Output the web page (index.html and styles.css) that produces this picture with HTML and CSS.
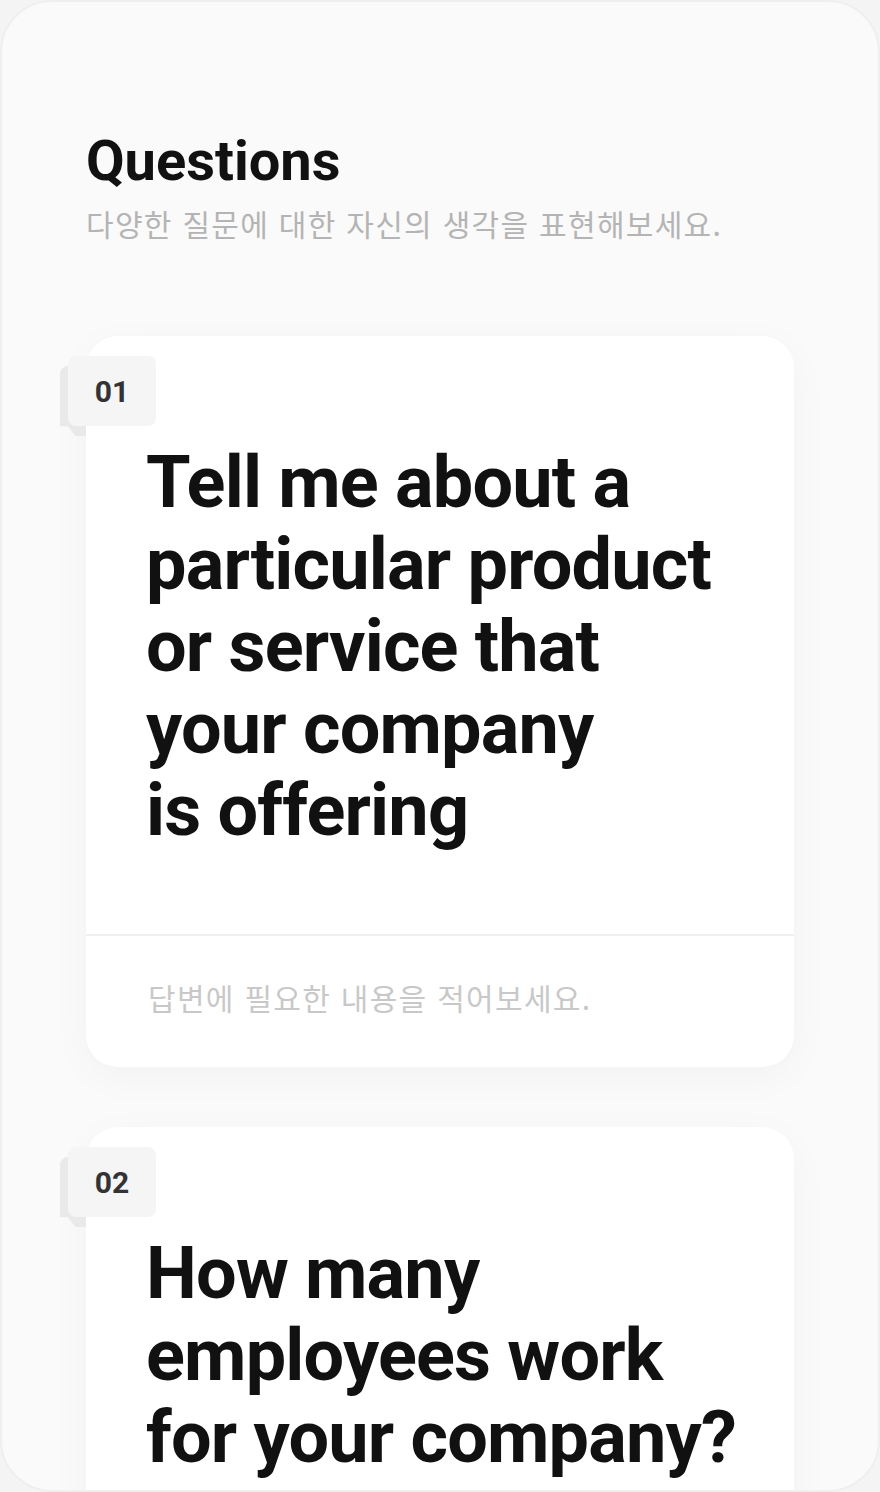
FILE: index.html
```html
<!DOCTYPE html>
<html lang="ko">
<head>
<meta charset="utf-8">
<title>Questions</title>
<link rel="stylesheet" href="styles.css">
</head>
<body>
<div class="frame">
  <header class="intro">
    <h1 class="title">Questions</h1>
    <p class="subtitle">다양한 질문에 대한 자신의 생각을 표현해보세요.</p>
  </header>
  <section class="list">
    <article class="card">
      <div class="badge"><span class="badge-fold"></span><span class="badge-num">01</span></div>
      <h2 class="question">Tell me about a<br>particular product<br>or service that<br>your company<br>is offering</h2>
      <div class="answer">답변에 필요한 내용을 적어보세요.</div>
    </article>
    <article class="card">
      <div class="badge"><span class="badge-fold"></span><span class="badge-num">02</span></div>
      <h2 class="question">How many<br>employees work<br>for your company?</h2>
      <div class="answer">답변에 필요한 내용을 적어보세요.</div>
    </article>
  </section>
</div>
</body>
</html>
```

FILE: styles.css
```css
html, body {
  margin: 0;
  padding: 0;
  background: #f4f4f4;
}
body {
  font-family: Roboto, "Noto Sans CJK KR", sans-serif;
}
.frame {
  box-sizing: border-box;
  width: 880px;
  height: 1492px;
  border: 2px solid #efefef;
  border-radius: 52px;
  background: #fafafa;
  overflow: hidden;
  padding: 127px 84px 0 84px;
}
.intro {
  display: flex;
  flex-direction: column;
}
.title {
  margin: 0;
  font-family: Roboto, sans-serif;
  font-weight: 700;
  font-size: 56px;
  line-height: 64px;
  letter-spacing: 0;
  color: #111111;
}
.subtitle {
  margin: 13px 0 0 0;
  font-family: "Noto Sans CJK KR", sans-serif;
  font-size: 30px;
  line-height: 34px;
  letter-spacing: 1.3px;
  color: #b4b4b4;
}
.list {
  display: flex;
  flex-direction: column;
  gap: 60px;
  margin-top: 96px;
}
.card {
  position: relative;
  background: #ffffff;
  border-radius: 32px;
  box-shadow: 0 10px 40px rgba(0, 0, 0, 0.035);
}
.badge {
  position: absolute;
  left: -18px;
  top: 20px;
  width: 88px;
  height: 70px;
}
.badge-fold {
  position: absolute;
  left: -8px;
  top: 10px;
  width: 26px;
  height: 70px;
  background: #e9e9e9;
  border-radius: 8px 0 0 8px;
  clip-path: polygon(0 0, 100% 0, 100% 100%, 60% 100%, 30% 86%, 0 86%, 0 100%);
}
.badge-num {
  position: relative;
  display: flex;
  align-items: center;
  justify-content: center;
  width: 88px;
  height: 70px;
  border-radius: 8px;
  background: #f5f5f5;
  font-family: Roboto, sans-serif;
  font-weight: 700;
  font-size: 30px;
  color: #333333;
}
.question {
  margin: 0;
  padding: 106px 40px 82px 60px;
  font-family: Roboto, sans-serif;
  font-weight: 700;
  font-size: 72px;
  line-height: 82px;
  letter-spacing: -0.8px;
  color: #111111;
  white-space: nowrap;
  border-bottom: 2px solid #f0f0f0;
}
.answer {
  padding: 44px 62px 53px 62px;
  font-family: "Noto Sans CJK KR", sans-serif;
  font-size: 30px;
  line-height: 34px;
  letter-spacing: 1.3px;
  color: #c8c8c8;
}
```
